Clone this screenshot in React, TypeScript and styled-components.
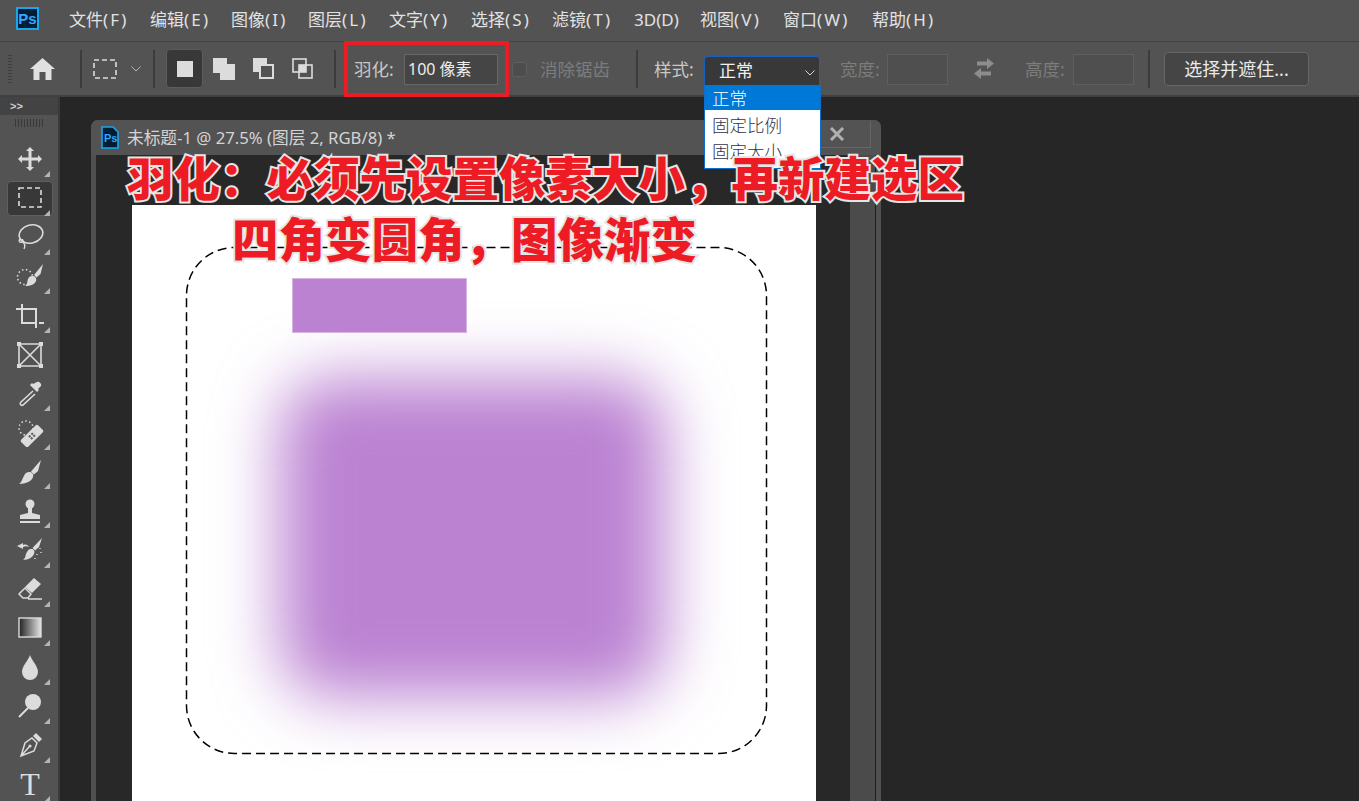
import styled, { createGlobalStyle } from "styled-components";
import type { ReactNode } from "react";

const Global = createGlobalStyle`
  html, body { margin: 0; padding: 0; background: #262626; }
  body { font-family: "Noto Sans", "Noto Sans CJK SC", sans-serif; }
`;

const Page = styled.div`
  position: relative;
  width: 1359px;
  height: 801px;
  overflow: hidden;
  display: flex;
  flex-direction: column;
  background: #262626;
`;

/* top menu */
const MenuBar = styled.div`
  height: 42px;
  flex: none;
  box-sizing: border-box;
  display: flex;
  align-items: center;
  padding-left: 16px;
  background: #535353;
  border-bottom: 1px solid #424242;
`;

const PsLogo = styled.div`
  width: 23px;
  height: 23px;
  box-sizing: border-box;
  margin-right: 30px;
  margin-top: -4px;
  background: #001e36;
  border: 2px solid #1ba6ea;
  color: #31a8ff;
  font: bold 15px/19px "Liberation Sans", sans-serif;
  text-align: center;
`;

const MenuList = styled.div`
  display: flex;
  margin-top: -2px;
`;

const MenuItem = styled.span<{ $w: number }>`
  width: ${(p) => p.$w}px;
  flex: none;
  font-size: 17px;
  line-height: 24px;
  color: #e2e2e2;
  white-space: nowrap;
`;

const MenuKey = styled.span<{ $tight?: boolean }>`
  letter-spacing: ${(p) => (p.$tight ? 0 : 2.2)}px;
`;

/* options bar */
const OptionsBar = styled.div`
  height: 55px;
  flex: none;
  box-sizing: border-box;
  display: flex;
  align-items: center;
  padding-left: 8px;
  background: #535353;
  border-bottom: 2px solid #404040;
`;

const Grip = styled.div`
  width: 4px;
  height: 28px;
  flex: none;
  background: repeating-linear-gradient(to bottom, #3d3d3d 0 1px, transparent 1px 3px);
`;

const Divider = styled.div<{ $ml: number }>`
  width: 2px;
  height: 38px;
  flex: none;
  margin-left: ${(p) => p.$ml}px;
  background: #3c3c3c;
`;

const BarIcon = styled.svg<{ $ml: number }>`
  flex: none;
  margin-left: ${(p) => p.$ml}px;
  display: block;
`;

const ModeButton = styled.div`
  width: 37px;
  height: 39px;
  flex: none;
  box-sizing: border-box;
  margin-left: 11px;
  display: flex;
  align-items: center;
  justify-content: center;
  background: #383838;
  border: 1px solid #5c5c5c;
  border-radius: 4px;
`;

const ModeSquare = styled.div`
  width: 16px;
  height: 16px;
  background: #dcdcdc;
`;

const AnnotatedGroup = styled.div`
  width: 165px;
  height: 56px;
  flex: none;
  box-sizing: border-box;
  margin-left: 8px;
  padding-left: 6px;
  display: flex;
  align-items: center;
  border: 4px solid #ed1c24;
`;

const Label = styled.span<{ $ml: number; $w: number; $off?: boolean }>`
  flex: none;
  width: ${(p) => p.$w}px;
  margin-left: ${(p) => p.$ml}px;
  font-size: 17.5px;
  line-height: 24px;
  white-space: nowrap;
  color: ${(p) => (p.$off ? "#7c7c7c" : "#c8c8c8")};
`;

const Field = styled.div<{ $ml: number; $w: number; $empty?: boolean }>`
  width: ${(p) => p.$w}px;
  height: 31px;
  flex: none;
  box-sizing: border-box;
  margin-left: ${(p) => p.$ml}px;
  margin-top: 2px;
  padding-left: 3px;
  font-size: 16px;
  line-height: 29px;
  color: #ececec;
  background: ${(p) => (p.$empty ? "#4f4f4f" : "#454545")};
  border: 1px solid ${(p) => (p.$empty ? "#5f5f5f" : "#676767")};
`;

const Checkbox = styled.div`
  width: 15px;
  height: 15px;
  flex: none;
  box-sizing: border-box;
  margin-left: 3px;
  margin-top: 2px;
  background: #4d4d4d;
  border: 1px solid #5e5e5e;
  border-radius: 3px;
`;

const SelectBox = styled.div`
  position: relative;
  width: 116px;
  height: 29px;
  flex: none;
  align-self: flex-start;
  box-sizing: border-box;
  margin-left: 9px;
  margin-top: 14px;
  padding: 0 0 3px 14px;
  display: flex;
  align-items: center;
  font-size: 17px;
  color: #f0f0f0;
  background: #383838;
  border: 1px solid #1560c0;
  border-bottom: none;
  border-radius: 4px 4px 0 0;
`;

const SelectChevron = styled.svg`
  position: absolute;
  right: 4px;
  top: 13px;
`;

const DropList = styled.div`
  position: absolute;
  left: -1px;
  top: 28px;
  width: 117px;
  height: 84px;
  box-sizing: border-box;
  z-index: 5;
  background: #fff;
  border: 1px solid #0d6fc9;
  border-top: none;
`;

const DropItem = styled.div<{ $active?: boolean }>`
  height: ${(p) => (p.$active ? 25 : 26)}px;
  padding-left: 7px;
  font-size: 17.5px;
  font-weight: 300;
  line-height: ${(p) => (p.$active ? 27 : 30)}px;
  color: ${(p) => (p.$active ? "#fff" : "#33334a")};
  background: ${(p) => (p.$active ? "#0078d7" : "#fff")};
`;

const MaskButton = styled.div`
  width: 145px;
  height: 34px;
  flex: none;
  box-sizing: border-box;
  margin-left: 14px;
  font-size: 18px;
  line-height: 32px;
  text-align: center;
  color: #eaeaea;
  background: #454545;
  border: 1px solid #666;
  border-radius: 4px;
`;

/* workspace */
const Workspace = styled.div`
  flex: 1;
  min-height: 0;
  display: flex;
`;

const ToolPanel = styled.div`
  width: 60px;
  flex: none;
  box-sizing: border-box;
  display: flex;
  flex-direction: column;
  background: #535353;
  border-right: 2px solid #3b3b3b;
`;

const CollapseStrip = styled.div`
  height: 18px;
  flex: none;
  padding-left: 10px;
  background: #434343;
  color: #cfcfcf;
  font: bold 11px/19px "Liberation Sans", sans-serif;
  letter-spacing: 0;
`;

const PanelGrip = styled.div`
  height: 8px;
  width: 28px;
  flex: none;
  margin: 4px 0 12.5px 15px;
  background: repeating-linear-gradient(to right, #393939 0 1px, transparent 1px 3px);
`;

const ToolCell = styled.div<{ $active?: boolean; $plain?: boolean }>`
  position: relative;
  width: 46px;
  height: 39.1px;
  flex: none;
  box-sizing: border-box;
  margin-left: 7px;
  display: flex;
  align-items: center;
  justify-content: center;

  &::before {
    content: "";
    display: ${(p) => (p.$active ? "block" : "none")};
    position: absolute;
    inset: 2px 0;
    box-sizing: border-box;
    border-radius: 4px;
    background: #383838;
    border: 1px solid #5f5f5f;
  }

  &::after {
    content: "";
    display: ${(p) => (p.$plain ? "none" : "block")};
    position: absolute;
    right: 3px;
    bottom: 2px;
    width: 0;
    height: 0;
    border-left: 6px solid transparent;
    border-bottom: 6px solid #b5b5b5;
  }
`;

const ToolSvg = styled.svg`
  position: relative;
  width: 28px;
  height: 28px;
  display: block;
  fill: #dcdcdc;
  stroke: none;
`;

const TypeGlyph = styled.span`
  font: 32px/36px "Liberation Serif", serif;
  color: #dcdcdc;
  margin-top: -2px;
`;

const Stage = styled.div`
  flex: 1;
  padding: 23px 0 0 31px;
  overflow: hidden;
`;

const DocWindow = styled.div`
  width: 790px;
  height: 100%;
  display: flex;
  flex-direction: column;
  border-radius: 7px 7px 0 0;
  overflow: hidden;
  background: #4f4f4f;
`;

const TitleBar = styled.div`
  height: 35px;
  flex: none;
  box-sizing: border-box;
  display: flex;
  align-items: center;
  padding-left: 10px;
  background: #535353;
`;

const TitleText = styled.span`
  margin-left: 8px;
  flex: 1;
  font-size: 16.7px;
  line-height: 24px;
  color: #d4d4d4;
  white-space: nowrap;
`;

const CloseTab = styled.div`
  width: 50px;
  height: 27px;
  flex: none;
  align-self: flex-start;
  box-sizing: border-box;
  margin-right: 10px;
  margin-top: 1px;
  padding-left: 8px;
  display: flex;
  align-items: center;
  border-right: 1px solid #666;
  border-bottom: 1px solid #666;
`;

const DocBody = styled.div`
  flex: 1;
  min-height: 0;
  display: flex;
`;

const DocEdge = styled.div`
  width: 5px;
  flex: none;
  background: #505050;
`;

const CanvasArea = styled.div`
  width: 754px;
  flex: none;
  box-sizing: border-box;
  padding: 50px 0 0 36px;
  background: #282828;
  overflow: hidden;
`;

const Canvas = styled.div`
  position: relative;
  width: 684px;
  height: 640px;
  background: #fff;
  overflow: hidden;
`;

const PurpleRect = styled.div`
  position: absolute;
  left: 160px;
  top: 73px;
  width: 175px;
  height: 55px;
  box-sizing: border-box;
  background: #bb82d2;
  border: 1px solid #d8b4e4;
`;

const FeatherBlob = styled.div`
  position: absolute;
  left: 148px;
  top: 173px;
  width: 385px;
  height: 319px;
  border-radius: 50px;
  background: #bb82d2;
  filter: blur(32px);
`;

const MarqueeLine = styled.svg`
  position: absolute;
  left: 53px;
  top: 41px;
`;

const ScrollTrack = styled.div`
  width: 25px;
  flex: none;
  background: #4b4b4b;
  border-right: 1px solid #1e1e1e;
`;

const Callout = styled.div<{ $left: number; $top: number }>`
  position: absolute;
  left: ${(p) => p.$left}px;
  top: ${(p) => p.$top}px;
  z-index: 10;
  font-family: "Noto Sans CJK SC", sans-serif;
  font-size: 46.5px;
  font-weight: 900;
  line-height: 48px;
  white-space: nowrap;
  color: #ed1c24;
  -webkit-text-stroke: 4px #e6e6e6;
  paint-order: stroke fill;
`;

const S = (props: { children: ReactNode }) => <ToolSvg viewBox="0 0 28 28">{props.children}</ToolSvg>;

const line = { fill: "none", stroke: "#dcdcdc", strokeWidth: 2 };

const tools: { key: string; plain?: boolean; active?: boolean; icon: ReactNode }[] = [
  {
    key: "move",
    icon: (
      <S>
        <path d="M14 2l4 4h-2.5v6.5H22V10l4 4-4 4v-2.5h-6.5V22H18l-4 4-4-4h2.5v-6.5H6V18l-4-4 4-4v2.5h6.5V6H10z" />
      </S>
    ),
  },
  {
    key: "marquee",
    active: true,
    icon: (
      <S>
        <rect x="3" y="4" width="22" height="19" {...line} strokeWidth={1.6} strokeDasharray="5 3" />
      </S>
    ),
  },
  {
    key: "lasso",
    icon: (
      <S>
        <ellipse cx="15" cy="11" rx="12" ry="9" transform="rotate(-15 15 11)" {...line} strokeWidth={1.6} />
        <path d="M4 16c-2 2 0 4 2 3 2-1 1-3-1-2M7 19c2 2 2 5 1 7" {...line} strokeWidth={1.4} />
      </S>
    ),
  },
  {
    key: "quick",
    icon: (
      <S>
        <circle cx="9" cy="15" r="7.500" {...line} strokeWidth={1.6} strokeDasharray="1.5 2.5" />
        <path d="M27 2l-2.500 10-4 3.500-2.500-2.500z" />
        <path d="M16 14c3 0 5 2 4 5-1 3-5 5-11 5 3-2 2-5 3-7 1-2 2-3 4-3z" />
      </S>
    ),
  },
  {
    key: "crop",
    icon: (
      <S>
        <path d="M6 3v19h15M0 8h20v19M23 22h5" {...line} />
      </S>
    ),
  },
  {
    key: "frame",
    plain: true,
    icon: (
      <S>
        <path d="M3 3h22v22H3zM3 3l22 22M25 3L3 25" {...line} strokeWidth={1.6} />
        <path d="M1 1h4v4H1zM23 1h4v4h-4zM1 23h4v4H1zM23 23h4v4h-4z" />
      </S>
    ),
  },
  {
    key: "dropper",
    icon: (
      <S>
        <path d="M17 11L5 22c-2 2 0 4 2 3l12-11" {...line} strokeWidth={1.6} />
        <path d="M21 2c2-1 5 2 4 4l-3 3 1 1-2 2-7-7 2-2 1 1z" />
      </S>
    ),
  },
  {
    key: "heal",
    icon: (
      <S>
        <circle cx="10" cy="9" r="7" {...line} strokeWidth={1.5} strokeDasharray="1.5 2.5" />
        <rect x="4" y="12" width="24" height="10" rx="2" transform="rotate(-45 16 17)" />
        <path d="M13 18l5-5M15 20l5-5" stroke="#535353" strokeWidth={2} strokeDasharray="2 1.5" fill="none" />
      </S>
    ),
  },
  {
    key: "brush",
    icon: (
      <S>
        <path d="M25 2l-3 11-4 3.500-3-3z" />
        <path d="M13 14c3 0 5 2 4 5-1 4-7 7-14 7 3-2 3-5 5-8 1-3 3-4 5-4z" />
      </S>
    ),
  },
  {
    key: "stamp",
    icon: (
      <S>
        <circle cx="14" cy="7" r="4.500" />
        <path d="M12 10h4v6l8 2v4H4v-4l8-2zM4 24h20v2H4z" />
      </S>
    ),
  },
  {
    key: "history",
    icon: (
      <S>
        <path d="M26 2l-3 9-4 3.500-2.500-2.500z" />
        <path d="M15 13c3 0 4 2 3 5-1 3-6 6-11 6 3-2 2-5 4-8 1-2 2-3 4-3z" />
        <path d="M1 10l6-3v2c3-1 5 0 6 2-2-1-4-1-6 0v2z" />
        <path d="M24 12v1M21 18v1M25 16v1M19 22v1" {...line} strokeWidth={1.4} />
      </S>
    ),
  },
  {
    key: "eraser",
    icon: (
      <S>
        <path d="M18 3l7 6-9 9-7-6z" />
        <path d="M9 13l6 6-3 4H7l-4-4zM12 24h14" {...line} strokeWidth={1.5} />
      </S>
    ),
  },
  {
    key: "gradient",
    icon: (
      <S>
        <defs>
          <linearGradient id="toolGrad" x1="0" x2="1" y1="0" y2="0">
            <stop offset="0" stopColor="#222" />
            <stop offset="1" stopColor="#e4e4e4" />
          </linearGradient>
        </defs>
        <rect x="3" y="4" width="22" height="19" fill="url(#toolGrad)" stroke="#dcdcdc" strokeWidth={1.4} />
      </S>
    ),
  },
  {
    key: "blur",
    icon: (
      <S>
        <path d="M14 2c2 6 8 11 8 17a8 8 0 0 1-16 0c0-6 6-11 8-17z" />
      </S>
    ),
  },
  {
    key: "dodge",
    icon: (
      <S>
        <circle cx="17" cy="10" r="8" />
        <path d="M12 16l-9 9" {...line} />
      </S>
    ),
  },
  {
    key: "pen",
    icon: (
      <S>
        <path d="M20 2l6 6-3 3-6-6z" />
        <path d="M16 7l5 5-3 8-13 5 4-13zM5 25l8-9" {...line} strokeWidth={1.5} />
        <circle cx="14" cy="15" r="1.600" />
      </S>
    ),
  },
  {
    key: "type",
    icon: <TypeGlyph>T</TypeGlyph>,
  },
];

const menus: { name: string; key: string; w: number; tight?: boolean }[] = [
  { name: "文件", key: "(F)", w: 81 },
  { name: "编辑", key: "(E)", w: 81 },
  { name: "图像", key: "(I)", w: 77 },
  { name: "图层", key: "(L)", w: 81 },
  { name: "文字", key: "(Y)", w: 82 },
  { name: "选择", key: "(S)", w: 81 },
  { name: "滤镜", key: "(T)", w: 82 },
  { name: "", key: "3D(D)", w: 66, tight: true },
  { name: "视图", key: "(V)", w: 83 },
  { name: "窗口", key: "(W)", w: 89 },
  { name: "帮助", key: "(H)", w: 70 },
];

export default function App() {
  return (
    <Page>
      <Global />
      <MenuBar>
        <PsLogo>Ps</PsLogo>
        <MenuList>
          {menus.map((m) => (
            <MenuItem key={m.key} $w={m.w}>
              {m.name}
              <MenuKey $tight={m.tight}>{m.key}</MenuKey>
            </MenuItem>
          ))}
        </MenuList>
      </MenuBar>

      <OptionsBar>
        <Grip />
        <BarIcon $ml={18} width="25" height="22" viewBox="0 0 25 22" fill="#e0e0e0">
          <path d="M12.500 0L25 11h-3.500v11h-6v-8h-6v8h-6V11H0z" />
        </BarIcon>
        <Divider $ml={25} />
        <BarIcon $ml={11} width="24" height="20" viewBox="0 0 24 20" fill="none" stroke="#dcdcdc" strokeWidth="1.6">
          <rect x="1" y="1" width="22" height="18" strokeDasharray="5 3" />
        </BarIcon>
        <BarIcon $ml={14} width="10" height="6" viewBox="0 0 10 6" fill="none" stroke="#b5b5b5" strokeWidth="1">
          <path d="M0.500 0.500L5 5l4.500-4.500" />
        </BarIcon>
        <Divider $ml={12} />
        <ModeButton>
          <ModeSquare />
        </ModeButton>
        <BarIcon $ml={10} width="22" height="22" viewBox="0 0 22 22" fill="#dcdcdc">
          <path d="M0 0h14v6h8v16H7v-7H0z" />
        </BarIcon>
        <BarIcon $ml={18} width="21" height="21" viewBox="0 0 21 21">
          <rect x="0" y="0" width="14" height="14" fill="#dcdcdc" />
          <rect x="7" y="7" width="13" height="13" fill="#535353" stroke="#dcdcdc" strokeWidth="2" />
        </BarIcon>
        <BarIcon $ml={18} width="21" height="21" viewBox="0 0 21 21" fill="none" stroke="#dcdcdc" strokeWidth="1.6">
          <rect x="1" y="1" width="13" height="13" />
          <rect x="7" y="7" width="13" height="13" />
          <rect x="7" y="7" width="7" height="7" fill="#dcdcdc" stroke="none" />
        </BarIcon>
        <Divider $ml={21} />
        <AnnotatedGroup>
          <Label $ml={0} $w={40}>羽化:</Label>
          <Field $ml={10} $w={94}>100 像素</Field>
        </AnnotatedGroup>
        <Checkbox />
        <Label $ml={13} $w={70} $off>消除锯齿</Label>
        <Divider $ml={26} />
        <Label $ml={16} $w={41}>样式:</Label>
        <SelectBox>
          正常
          <SelectChevron width="10" height="6" viewBox="0 0 10 6" fill="none" stroke="#d8d8d8" strokeWidth="1">
            <path d="M0.500 0.500L5 5l4.500-4.500" />
          </SelectChevron>
          <DropList>
            <DropItem $active>正常</DropItem>
            <DropItem>固定比例</DropItem>
            <DropItem>固定大小</DropItem>
          </DropList>
        </SelectBox>
        <Label $ml={20} $w={40} $off>宽度:</Label>
        <Field $ml={7} $w={61} $empty />
        <BarIcon $ml={26} width="20" height="21" viewBox="0 0 20 21" fill="#8c8c8c">
          <path d="M13 0l7 5.500-7 5.500V7.500H3v-4h10zM7 10v3.500h10v4H7V21l-7-5.500z" />
        </BarIcon>
        <Label $ml={31} $w={40} $off>高度:</Label>
        <Field $ml={8} $w={61} $empty />
        <Divider $ml={14} />
        <MaskButton>选择并遮住...</MaskButton>
      </OptionsBar>

      <Workspace>
        <ToolPanel>
          <CollapseStrip>&gt;&gt;</CollapseStrip>
          <PanelGrip />
          {tools.map((t) => (
            <ToolCell key={t.key} $active={t.active} $plain={t.plain}>
              {t.icon}
            </ToolCell>
          ))}
        </ToolPanel>
        <Stage>
          <DocWindow>
            <TitleBar>
              <svg width="18" height="23" viewBox="0 0 18 23">
                <path d="M1 1h11l5 5v16H1z" fill="#001e36" stroke="#1ba6ea" strokeWidth="1.6" />
                <text x="3" y="16" fontFamily="Liberation Sans, sans-serif" fontWeight="bold" fontSize="11" fill="#31a8ff">Ps</text>
              </svg>
              <TitleText>未标题-1 @ 27.5% (图层 2, RGB/8) *</TitleText>
              <CloseTab>
                <svg width="16" height="14" viewBox="0 0 16 14" stroke="#b0b0b0" strokeWidth="3">
                  <path d="M2 1l12 12M14 1L2 13" />
                </svg>
              </CloseTab>
            </TitleBar>
            <DocBody>
              <DocEdge />
              <CanvasArea>
                <Canvas>
                  <FeatherBlob />
                  <PurpleRect />
                  <MarqueeLine width="584" height="510" viewBox="0 0 584 510">
                    <rect x="1.500" y="1.500" width="580" height="506" rx="48" fill="none" stroke="#000" strokeWidth="1.5" strokeDasharray="9 5" />
                  </MarqueeLine>
                </Canvas>
              </CanvasArea>
              <ScrollTrack />
              <DocEdge />
            </DocBody>
          </DocWindow>
        </Stage>
      </Workspace>

      <Callout $left={127} $top={152}>羽化：必须先设置像素大小，再新建选区</Callout>
      <Callout $left={232} $top={213}>四角变圆角，图像渐变</Callout>
    </Page>
  );
}
